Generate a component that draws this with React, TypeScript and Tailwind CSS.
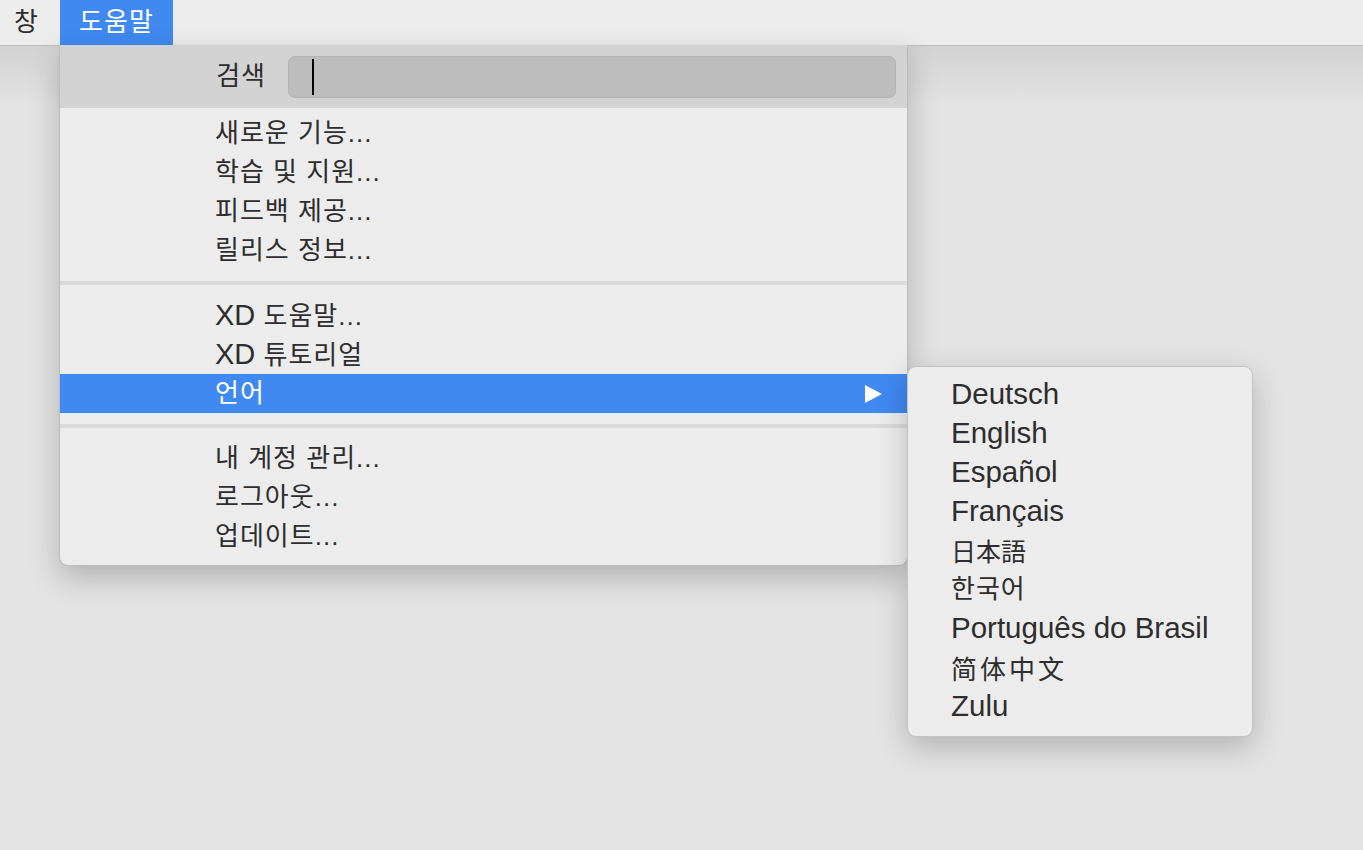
import { useState } from "react";

const sans = "font-['Liberation_Sans','Noto_Sans_CJK_KR',sans-serif]";

const groups: string[][] = [
    ["새로운 기능...", "학습 및 지원...", "피드백 제공...", "릴리스 정보..."],
    ["XD 도움말...", "XD 튜토리얼", "언어"],
    ["내 계정 관리...", "로그아웃...", "업데이트..."],
];

const languages = [
    "Deutsch",
    "English",
    "Español",
    "Français",
    "日本語",
    "한국어",
    "Português do Brasil",
    "简体中文",
    "Zulu",
];

// latin words are set a bit larger so their widths match the mac system font
const MenuLabel = ({ label }: { label: string }) => {
    if (label.startsWith("XD ")) {
        return (
            <span>
                <span className="text-[29px] tracking-normal">XD</span> {label.slice(3)}
            </span>
        );
    }
    return <span>{label}</span>;
};

const LanguageMenu = () => {
    const isLatin = (s: string) => /^[A-Za-z]/.test(s);
    return (
        <div className="absolute left-full top-[-8px] w-[346px] rounded-[9px] border border-[#c3c3c3] bg-[#ececec] pt-[8px] pb-[10px] tracking-normal shadow-[0_10px_30px_rgba(0,0,0,0.22)]">
            {languages.map((lang) => (
                <div key={lang} className="flex h-[39px] items-center pl-[43px] text-[#2d2d2d]">
                    {isLatin(lang) ? (
                        <span className="text-[29.5px]">{lang}</span>
                    ) : lang === "简体中文" ? (
                        <span className="font-['Noto_Sans_CJK_SC',sans-serif] text-[26px] tracking-[3px]">{lang}</span>
                    ) : lang === "日本語" ? (
                        <span className="font-['Noto_Sans_CJK_JP',sans-serif] text-[25px]">{lang}</span>
                    ) : (
                        <span className="text-[26px] tracking-[1px]">{lang}</span>
                    )}
                </div>
            ))}
        </div>
    );
};

const App = () => {
    const [query] = useState("");
    return (
        <div className={`relative h-[850px] w-full overflow-hidden bg-[#e3e3e3] ${sans}`}>
            {/* menu bar */}
            <div className="flex h-[46px] items-stretch border-b border-[#bdbdbd] bg-[#ececec] text-[26px] tracking-[1px] text-[#2d2d2d]">
                <div className="flex w-[60px] items-center pl-[14px]">창</div>
                <div className="flex w-[113px] items-center justify-center bg-[#3f89f1] text-white">도움말</div>
            </div>
            <div className="h-[60px] bg-gradient-to-b from-[#d2d2d2] to-[#e3e3e3]" />

            {/* help menu */}
            <div className="absolute left-[59px] top-[45px] w-[849px] rounded-b-[9px] border-x border-b border-[#bcbcbc] bg-[#ececec] pb-[9px] text-[26px] tracking-[1px] text-[#2d2d2d] shadow-[0_12px_30px_rgba(0,0,0,0.22)]">
                <div className="flex h-[63px] items-center bg-[#d3d3d3] pr-[11px]">
                    <div className="w-[228px] pr-[22px] text-right">검색</div>
                    <div className="flex h-[42px] flex-1 items-center rounded-[7px] border border-[#b3b3b3] bg-[#bdbdbd] pl-[23px]">
                        <div className="h-[36px] w-[2px] bg-black" />
                        <span>{query}</span>
                    </div>
                </div>
                <div className="pt-[6px]">
                    {groups.map((group, gi) => (
                        <div key={gi}>
                            {gi > 0 && (
                                <div className="py-[11px]">
                                    <div className="h-[4px] bg-[#dadada]" />
                                </div>
                            )}
                            {group.map((label) =>
                                label === "언어" ? (
                                    <div
                                        key={label}
                                        className="relative flex h-[39px] items-center justify-between bg-[#3f89f1] pl-[155px] pr-[25px] text-white"
                                    >
                                        <span>{label}</span>
                                        <svg width="17" height="18" viewBox="0 0 17 18">
                                            <path d="M0 0 L17 9 L0 18 Z" fill="white" />
                                        </svg>
                                        <LanguageMenu />
                                    </div>
                                ) : (
                                    <div key={label} className="flex h-[39px] items-center pl-[155px]">
                                        <MenuLabel label={label} />
                                    </div>
                                )
                            )}
                        </div>
                    ))}
                </div>
            </div>
        </div>
    );
};

export default App;
